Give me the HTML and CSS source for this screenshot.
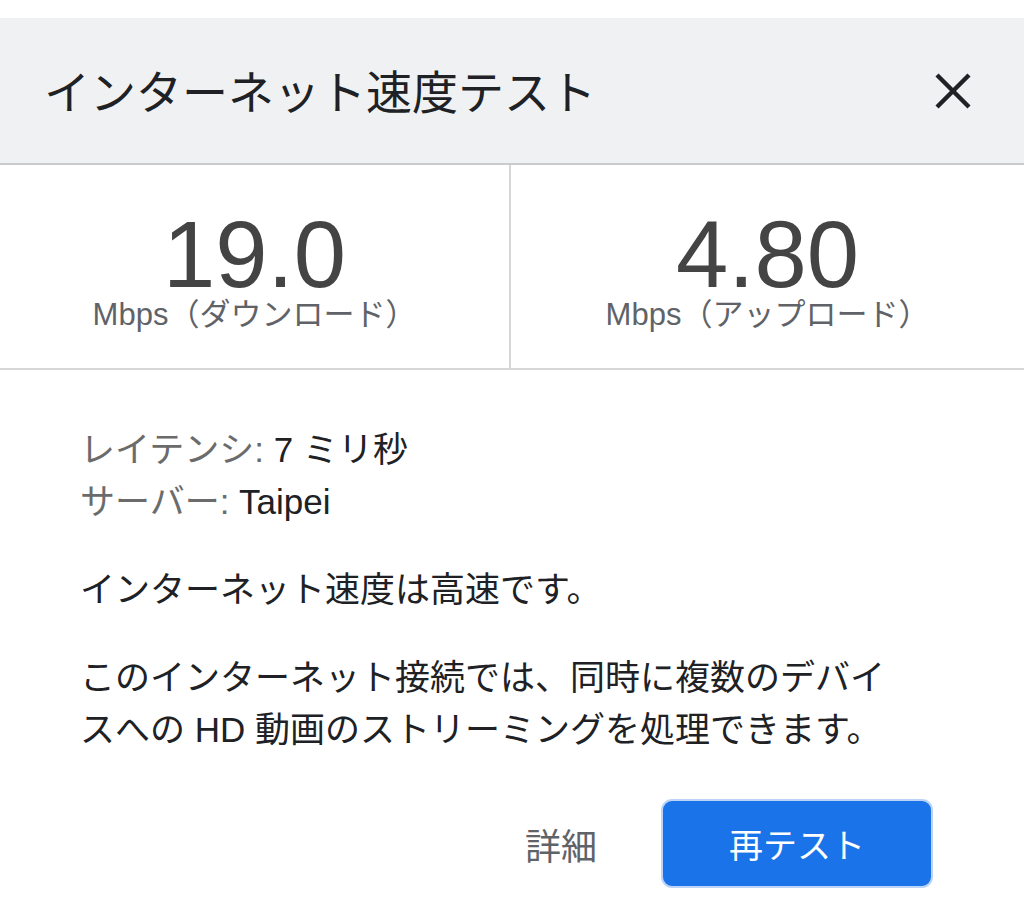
FILE: index.html
```html
<!DOCTYPE html>
<html lang="ja">
<head>
<meta charset="utf-8">
<link rel="stylesheet" href="styles.css">
</head>
<body>
<div class="dialog">
  <div class="header">
    <div class="title">インターネット速度テスト</div>
    <button class="close" aria-label="閉じる">
      <svg width="36" height="36" viewBox="0 0 36 36"><path d="M2 2 L34 34 M34 2 L2 34" stroke="#202124" stroke-width="4.4" fill="none"/></svg>
    </button>
  </div>
  <div class="stats">
    <div class="stat">
      <div class="num">19.0</div>
      <div class="unit">Mbps（ダウンロード）</div>
    </div>
    <div class="stat">
      <div class="num">4.80</div>
      <div class="unit">Mbps（アップロード）</div>
    </div>
  </div>
  <div class="details">
    <div class="meta">
      <div><span class="label">レイテンシ:</span> 7 ミリ秒</div>
      <div><span class="label">サーバー:</span> Taipei</div>
    </div>
    <p class="para">インターネット速度は高速です。</p>
    <p class="para">このインターネット接続では、同時に複数のデバイスへの HD 動画のストリーミングを処理できます。</p>
    <div class="actions">
      <button class="link">詳細</button>
      <button class="primary">再テスト</button>
    </div>
  </div>
</div>
</body>
</html>
```
FILE: styles.css
```css
html, body {
  margin: 0;
  background: #ffffff;
}
body {
  font-family: "Liberation Sans", "Noto Sans CJK JP", sans-serif;
  color: #202124;
}
.dialog {
  margin-top: 18px;
}
.header {
  height: 145px;
  background: #eff1f3;
  border-bottom: 2px solid #c9cbcd;
  display: flex;
  align-items: center;
  justify-content: space-between;
  padding: 0 53px 0 44px;
}
.title {
  font-family: "Noto Sans CJK JP", sans-serif;
  font-size: 46px;
  line-height: 1;
  color: #202124;
  margin-top: -4px;
}
.close {
  border: 0;
  background: transparent;
  padding: 0;
  width: 36px;
  height: 36px;
  display: flex;
}
.stats {
  display: grid;
  grid-template-columns: 511px 1fr;
  height: 203px;
  border-bottom: 2px solid #d6d6d6;
}
.stat {
  display: flex;
  flex-direction: column;
  align-items: center;
  padding-top: 50px;
}
.stat:first-child {
  border-right: 2px solid #d6d6d6;
}
.num {
  font-size: 94px;
  line-height: 80px;
  color: #444444;
}
.unit {
  font-size: 31px;
  line-height: 36px;
  color: #5f6368;
  margin-top: 2px;
}
.details {
  padding: 54px 91px 0 80px;
  font-size: 35px;
  line-height: 52px;
  color: #202124;
}
.label {
  color: #6b6b6b;
}
.para {
  margin: 36px 0 0;
  max-width: 830px;
}
.actions {
  display: flex;
  justify-content: flex-end;
  align-items: center;
  gap: 64px;
  margin-top: 43px;
}
.link {
  border: 0;
  background: transparent;
  padding: 0;
  font-family: "Noto Sans CJK JP", sans-serif;
  font-size: 36px;
  color: #5f6368;
}
.primary {
  width: 272px;
  height: 89px;
  border-radius: 11px;
  border: 2px solid #bcd4f7;
  background: #1a73e8;
  color: #ffffff;
  font-family: "Noto Sans CJK JP", sans-serif;
  font-size: 34px;
  padding: 0;
}
```
